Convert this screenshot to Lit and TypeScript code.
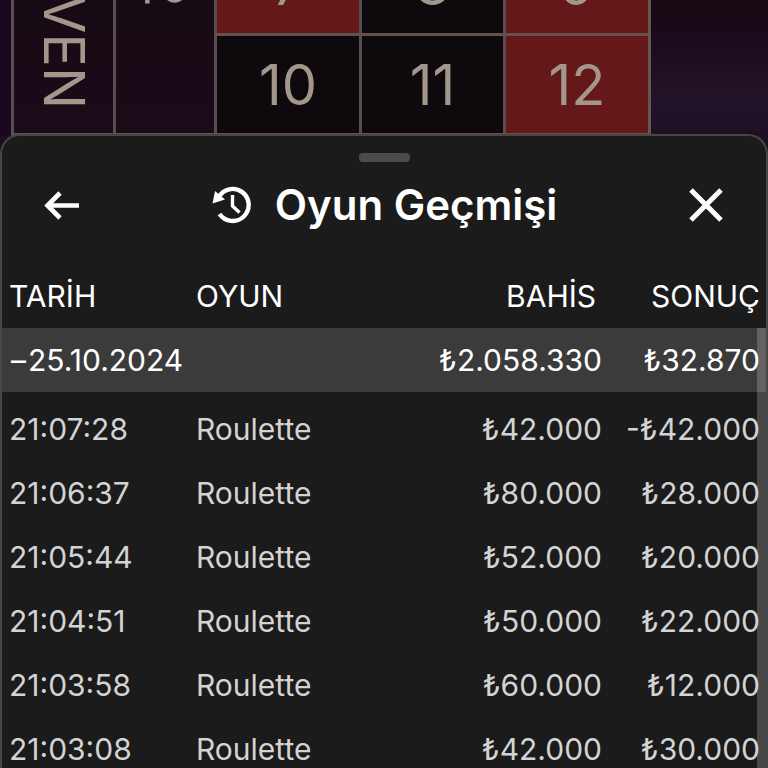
import { LitElement, html, css, svg } from "lit";
import { customElement } from "lit/decorators.js";

interface Round {
  time: string;
  game: string;
  bet: string;
  result: string;
}

const ROUNDS: Round[] = [
  { time: "21:07:28", game: "Roulette", bet: "₺42.000", result: "-₺42.000" },
  { time: "21:06:37", game: "Roulette", bet: "₺80.000", result: "₺28.000" },
  { time: "21:05:44", game: "Roulette", bet: "₺52.000", result: "₺20.000" },
  { time: "21:04:51", game: "Roulette", bet: "₺50.000", result: "₺22.000" },
  { time: "21:03:58", game: "Roulette", bet: "₺60.000", result: "₺12.000" },
  { time: "21:03:08", game: "Roulette", bet: "₺42.000", result: "₺30.000" },
];

const backIcon = svg`<svg width="36" height="30" viewBox="0 0 36 30" fill="none" stroke="#fff" stroke-width="4.6" aria-hidden="true">
  <path d="M35 15.500H4M16 3L3.500 15.500L16 28" /></svg>`;

const closeIcon = svg`<svg width="36" height="36" viewBox="0 0 36 36" fill="none" stroke="#fff" stroke-width="5" aria-hidden="true">
  <path d="M3 3L33 33M33 3L3 33" /></svg>`;

const historyIcon = svg`<svg width="40" height="40" viewBox="0 0 40 40" fill="none" stroke="#fff" aria-hidden="true">
  <path d="M7.500 12.500A16 16 0 1 1 8.500 29" stroke-width="4.4" />
  <path d="M21.500 10V21L28.500 27.500" stroke-width="3.4" />
  <path d="M4 6L1.500 18.500L14 14.500Z" fill="#fff" stroke="none" /></svg>`;

/** The betting layout that stays visible above the sheet. */
@customElement("bet-board")
export class BetBoard extends LitElement {
  static styles = css`
    :host {
      display: block;
      height: 136px;
      overflow: hidden;
      background: linear-gradient(90deg, #1c0722 0 11px, transparent 11px);
    }
    .board {
      height: 100%;
      margin: 0 117px 0 11px;
      display: grid;
      grid-template-columns: 102fr 101fr 145fr 144fr 145fr;
      grid-template-rows: 100px 100px;
      align-content: end;
      color: #a3968b;
      font-size: 56px;
      line-height: 60px;
      border-right: 3px solid #6b5350;
      background: #150912;
    }
    .cell {
      display: grid;
      place-items: center;
      border-left: 3px solid #5b4c51;
      border-bottom: 3px solid #64524f;
      background: #0d090c;
    }
    .red {
      background: #641818;
    }
    .tall {
      grid-row: 1 / 3;
      min-height: 0;
      writing-mode: vertical-rl;
      place-content: center end;
      white-space: nowrap;
      background: linear-gradient(#150a12, #190b18);
    }
    .even {
      padding-bottom: 24px;
    }
    .dozen {
      padding-bottom: 126px;
    }
  `;

  render() {
    return html`<div class="board">
      <div class="cell tall even">EVEN</div>
      <div class="cell tall dozen">1st 12</div>
      <div class="cell red">7</div>
      <div class="cell">8</div>
      <div class="cell red">9</div>
      <div class="cell">10</div>
      <div class="cell">11</div>
      <div class="cell red">12</div>
    </div>`;
  }
}

@customElement("app-root")
export class AppRoot extends LitElement {
  static styles = css`
    :host {
      display: flex;
      flex-direction: column;
      height: 100vh;
      overflow: hidden;
      font-family: Inter, "Noto Sans", sans-serif;
      background: linear-gradient(#180912, #1b0a1c 40px, #221429 100px, #160a1e 180px);
    }
    .sheet {
      flex: 1;
      min-height: 0;
      margin-top: -2px;
      position: relative;
      display: flex;
      flex-direction: column;
      box-sizing: border-box;
      border: 2px solid #474546;
      border-bottom: 0;
      border-radius: 20px 20px 0 0;
      background: #1b1b1b;
      color: #fff;
      overflow: hidden;
    }
    .grip {
      flex: none;
      width: 51px;
      height: 9px;
      margin: 17px auto 0;
      border-radius: 4px;
      background: #4b4b4b;
    }
    header {
      flex: none;
      display: flex;
      align-items: center;
      justify-content: space-between;
      height: 86px;
      margin-bottom: 16px;
      padding: 0 42px;
    }
    button {
      display: grid;
      place-items: center;
      padding: 0;
      border: 0;
      background: none;
      cursor: pointer;
    }
    h1 {
      display: flex;
      align-items: center;
      gap: 24px;
      margin: 0;
      font-size: 42px;
      line-height: 52px;
      font-weight: 600;
    }
    .scroller {
      flex: 1;
      min-height: 0;
      overflow: hidden;
    }
    table {
      width: 100%;
      table-layout: fixed;
      border-collapse: collapse;
      font-size: 30px;
      line-height: 36px;
      color: #d3d3d3;
    }
    th,
    td {
      height: 64px;
      padding: 0;
      box-sizing: border-box;
      font-weight: 400;
      text-align: left;
      white-space: nowrap;
    }
    .time {
      width: 194px;
      padding-left: 7px;
    }
    .bet,
    .result {
      text-align: right;
    }
    .result {
      width: 164px;
      padding-right: 6px;
    }
    .head th,
    .day td,
    .day th {
      color: #fff;
    }
    .head th.bet {
      padding-right: 6px;
    }
    .day {
      background: #3b3b3b;
    }
    .fold {
      display: inline-block;
      margin: 0 2px;
    }
    .gap td {
      height: 5px;
    }
    .track {
      position: absolute;
      top: 192px;
      right: 0;
      bottom: 0;
      width: 9px;
      background: rgba(255, 255, 255, 0.2);
    }
  `;

  render() {
    return html`
      <bet-board></bet-board>
      <section class="sheet">
        <div class="grip"></div>
        <header>
          <button aria-label="Geri">${backIcon}</button>
          <h1>${historyIcon}<span>Oyun Geçmişi</span></h1>
          <button aria-label="Kapat">${closeIcon}</button>
        </header>
        <div class="scroller">
          <table>
            <thead>
              <tr class="head">
                <th class="time" scope="col">TARİH</th>
                <th scope="col">OYUN</th>
                <th class="bet" scope="col">BAHİS</th>
                <th class="result" scope="col">SONUÇ</th>
              </tr>
            </thead>
            <tbody>
              <tr class="day">
                <th class="time" scope="row" colspan="2"><span class="fold">–</span>25.10.2024</th>
                <td class="bet">₺2.058.330</td>
                <td class="result">₺32.870</td>
              </tr>
              <tr class="gap"><td colspan="4"></td></tr>
              ${ROUNDS.map(
                (r) => html`<tr>
                  <td class="time">${r.time}</td>
                  <td>${r.game}</td>
                  <td class="bet">${r.bet}</td>
                  <td class="result">${r.result}</td>
                </tr>`
              )}
            </tbody>
          </table>
        </div>
        <div class="track"></div>
      </section>
    `;
  }
}
